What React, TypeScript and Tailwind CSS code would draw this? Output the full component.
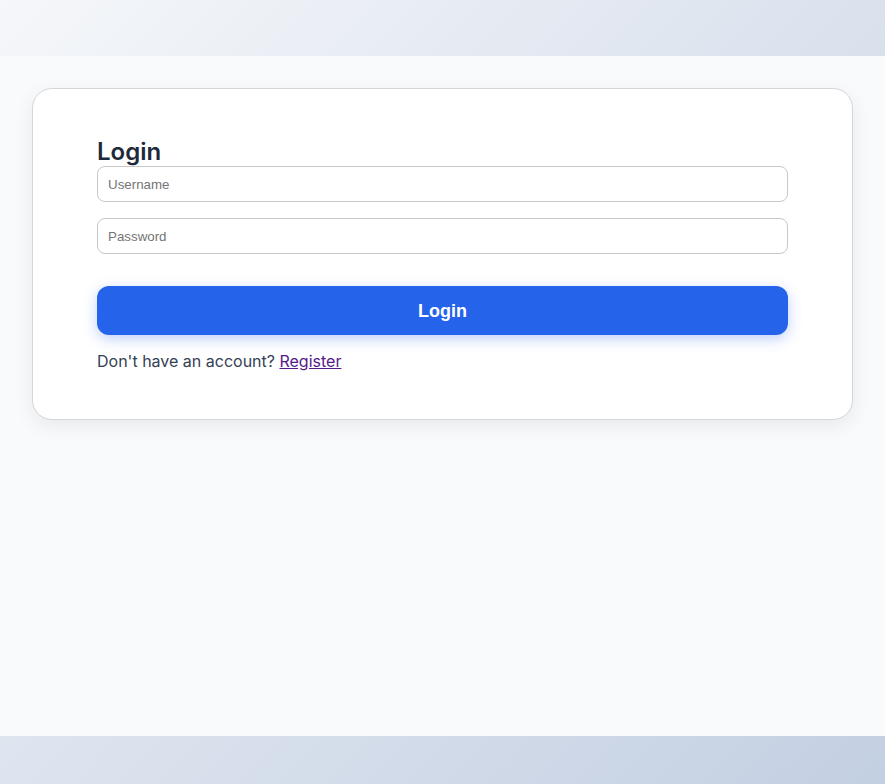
import React from 'react';

const App = () => {
    return (
        <div className="min-h-screen bg-[linear-gradient(135deg,#f5f7fa_0%,#c3cfe2_100%)] font-['Inter',sans-serif]">
            {/* top strip */}
            <header className="h-14" />

            <main className="h-[680px] bg-[#f9fafb] px-8 pt-8">
                <div className="rounded-[20px] border border-[#d4d6db] bg-white px-16 pt-[49px] pb-[46px] shadow-[0_6px_20px_rgba(0,0,0,0.07)]">
                    <h2 className="text-2xl leading-[28px] font-semibold text-[#1e293b]">Login</h2>

                    <form className="flex flex-col" onSubmit={e => e.preventDefault()}>
                        <input
                            type="text"
                            placeholder="Username"
                            className="h-9 rounded-lg border border-[#c8c8c8] px-[10px] pt-[1px] text-[13.33px] font-['Liberation_Sans',Arial,sans-serif] placeholder:text-[#757575] outline-none"
                        />
                        <input
                            type="password"
                            placeholder="Password"
                            className="mt-4 h-9 rounded-lg border border-[#c8c8c8] px-[10px] pt-[1px] text-[13.33px] font-['Liberation_Sans',Arial,sans-serif] placeholder:text-[#757575] outline-none"
                        />
                        <button
                            type="submit"
                            className="mt-8 h-[49px] rounded-xl bg-[#2563eb] text-lg font-bold text-white font-['Liberation_Sans',Arial,sans-serif] shadow-[0_4px_14px_rgba(37,99,235,0.3)]"
                        >
                            Login
                        </button>
                    </form>

                    <p className="mt-[14px] text-base leading-6 text-[#334155]">
                        Don't have an account? <a href="#" className="text-[#551a8b] underline">Register</a>
                    </p>
                </div>
            </main>

            <footer className="h-12" />
        </div>
    );
};

export default App;
